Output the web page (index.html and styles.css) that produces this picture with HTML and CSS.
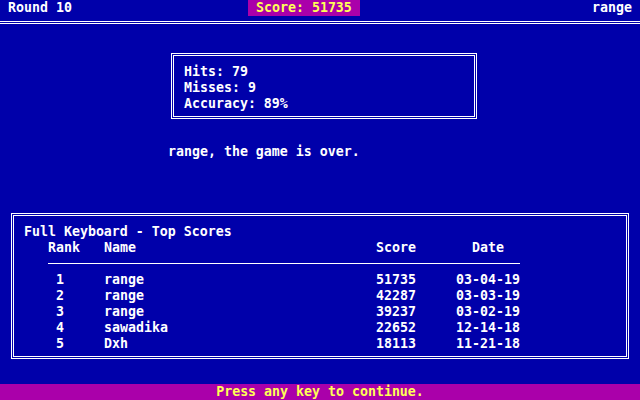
FILE: index.html
```html
<!DOCTYPE html>
<html>
<head>
<meta charset="utf-8">
<link rel="stylesheet" href="styles.css">
</head>
<body>
<div class="screen">
  <div class="topbar">
    <span class="round">Round 10</span>
    <span class="score-badge">Score: 51735</span>
    <span class="player">range</span>
  </div>
  <div class="rule"></div>
  <div class="stats">
    <div>Hits: 79</div>
    <div>Misses: 9</div>
    <div>Accuracy: 89%</div>
  </div>
  <div class="message">range, the game is over.</div>
  <div class="scores">
    <div class="scores-title">Full Keyboard - Top Scores</div>
    <div class="table">
      <div class="th">Rank</div><div class="th name">Name</div><div class="th">Score</div><div class="th date">Date</div>
      <div class="sep"></div>
      <div class="rank">1</div><div>range</div><div>51735</div><div>03-04-19</div>
      <div class="rank">2</div><div>range</div><div>42287</div><div>03-03-19</div>
      <div class="rank">3</div><div>range</div><div>39237</div><div>03-02-19</div>
      <div class="rank">4</div><div>sawadika</div><div>22652</div><div>12-14-18</div>
      <div class="rank">5</div><div>Dxh</div><div>18113</div><div>11-21-18</div>
    </div>
  </div>
  <div class="footer">Press any key to continue.</div>
</div>
</body>
</html>
```
FILE: styles.css
```css
html, body {
  margin: 0;
  padding: 0;
  background: #0000aa;
}
.screen {
  width: 640px;
  height: 400px;
  background: #0000aa;
  color: #ffffff;
  font-family: "DejaVu Sans Mono", "Liberation Mono", monospace;
  font-weight: bold;
  font-size: 13.288px;
  line-height: 16px;
  display: flex;
  flex-direction: column;
  white-space: nowrap;
  overflow: hidden;
}
.topbar {
  height: 16px;
  display: grid;
  grid-template-columns: 248px 112px 1fr;
}
.round {
  padding-left: 8px;
}
.score-badge {
  background: #aa00aa;
  color: #ffff55;
  padding-left: 8px;
}
.player {
  text-align: right;
  padding-right: 8px;
}
.rule {
  margin-top: 5px;
  height: 0;
  border-top: 3px double #ffffff;
}
.stats {
  box-sizing: border-box;
  margin-top: 29px;
  margin-left: 171px;
  width: 306px;
  height: 66px;
  border: 3px double #ffffff;
  padding: 8px 0 0 10px;
}
.message {
  margin-top: 25px;
  margin-left: 168px;
  height: 16px;
}
.scores {
  box-sizing: border-box;
  margin-top: 53px;
  margin-left: 11px;
  width: 618px;
  height: 146px;
  border: 3px double #ffffff;
  padding: 8px 0 0 10px;
}
.table {
  margin-left: 24px;
  width: 472px;
  display: grid;
  grid-template-columns: 56px 272px 80px 64px;
  grid-auto-rows: 16px;
}
.th.date {
  padding-left: 16px;
}
.rank {
  padding-left: 8px;
}
.sep {
  grid-column: 1 / -1;
  box-sizing: border-box;
  border-bottom: 1px solid #ffffff;
  height: 8px;
}
.footer {
  margin-top: auto;
  height: 16px;
  background: #aa00aa;
  color: #ffff55;
  text-align: center;
}
```
